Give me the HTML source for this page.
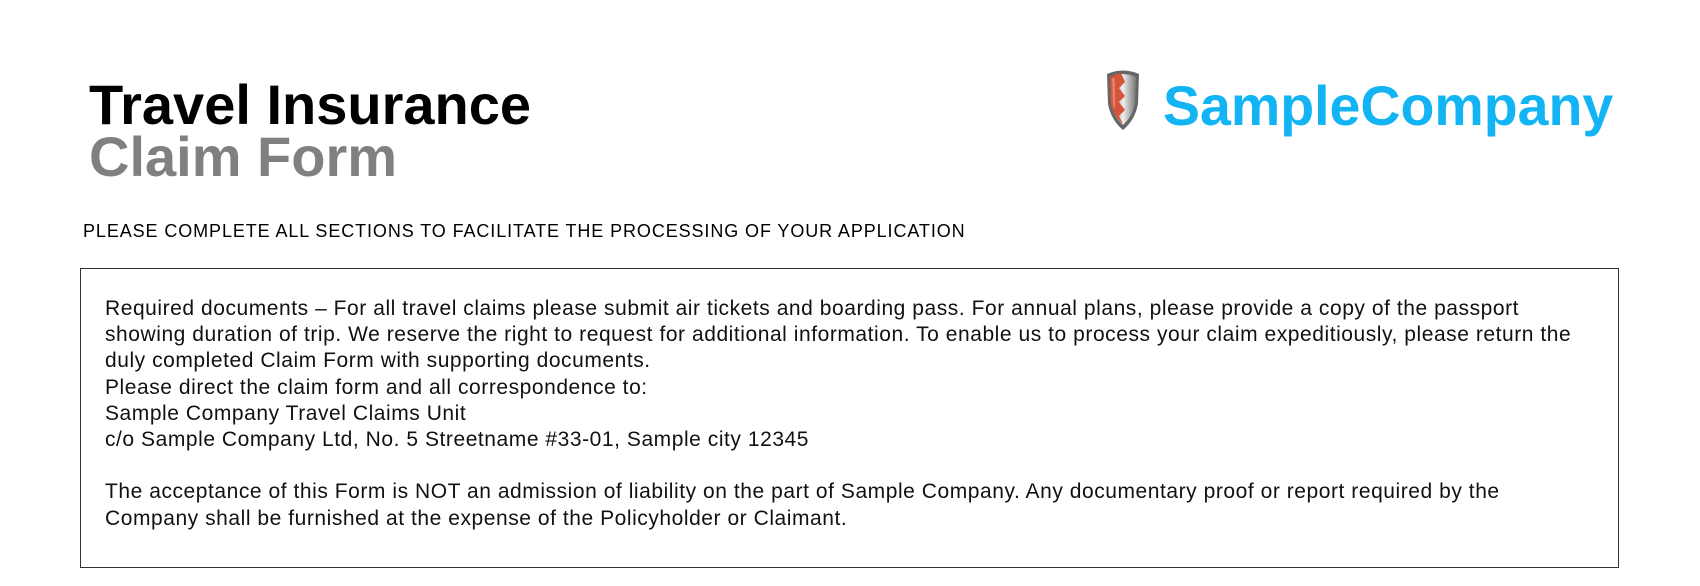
<!DOCTYPE html>
<html><head><meta charset="utf-8"><style>
body{margin:0;width:1700px;height:586px;background:#fff;position:relative;overflow:hidden;font-family:"Liberation Sans",Arial,sans-serif}
.a{position:absolute;white-space:nowrap}
#t1{left:89px;top:73px;font-size:56px;font-weight:bold;color:#000;line-height:64px}
#t2{left:89px;top:125px;font-size:56px;font-weight:bold;color:#808080;line-height:64px}
#sub{left:83px;top:220px;font-size:18px;letter-spacing:0.9px;line-height:22px;color:#000}
#box{position:absolute;left:80px;top:268px;width:1539px;height:300px;border:1.5px solid #333;box-sizing:border-box}
#txt{left:105px;top:296px;font-size:21px;letter-spacing:0.55px;line-height:26.2px;color:#111}
#logo{left:1163px;top:74px;font-size:55.5px;font-weight:bold;color:#12b4f3;line-height:64px}
</style></head><body>
<div class="a" id="t1">Travel Insurance</div>
<div class="a" id="t2">Claim Form</div>
<div class="a" id="logo">SampleCompany</div>
<svg class="a" style="left:1104px;top:68px" width="38" height="64" viewBox="0 0 38 64">
<defs><linearGradient id="g" x1="0" x2="1"><stop offset="0" stop-color="#888"/><stop offset=".5" stop-color="#eee"/><stop offset="1" stop-color="#777"/></linearGradient></defs>
<path d="M3 6 Q19 -1 35 6 L34 36 Q31 52 19 62 Q7 52 4 36 Z" fill="#666"/>
<path d="M6 9 Q19 3 32 9 L31 36 Q28 49 19 57 Q10 49 7 36 Z" fill="url(#g)"/>
<path d="M6 9 Q12 6 17 5 L21 14 L15 20 L21 28 L15 34 L21 42 L15 48 L19 56 Q10 49 7 36 Z" fill="#d4553a"/>
<path d="M8 10 L11 10 L11 40 L9 38 Z" fill="#f09080" opacity=".7"/>
</svg>
<div class="a" id="sub">PLEASE COMPLETE ALL SECTIONS TO FACILITATE THE PROCESSING OF YOUR APPLICATION</div>
<div id="box"></div>
<div class="a" id="txt">Required documents – For all travel claims please submit air tickets and boarding pass. For annual plans, please provide a copy of the passport<br>showing duration of trip. We reserve the right to request for additional information. To enable us to process your claim expeditiously, please return the<br>duly completed Claim Form with supporting documents.<br>Please direct the claim form and all correspondence to:<br>Sample Company Travel Claims Unit<br>c/o Sample Company Ltd, No. 5 Streetname #33-01, Sample city 12345<br><br>The acceptance of this Form is NOT an admission of liability on the part of Sample Company. Any documentary proof or report required by the<br>Company shall be furnished at the expense of the Policyholder or Claimant.</div>
</body></html>
